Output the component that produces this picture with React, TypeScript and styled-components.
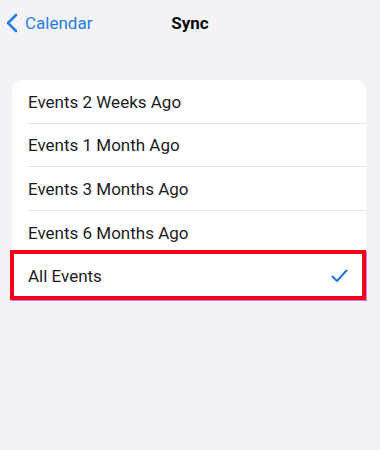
import React from "react";
import styled, { createGlobalStyle } from "styled-components";

const Global = createGlobalStyle`
  html, body { margin: 0; padding: 0; background: #f2f2f7; }
  body { font-family: Roboto, "Noto Sans", sans-serif; -webkit-font-smoothing: antialiased; }
`;

const Page = styled.div`
  width: 380px;
  height: 450px;
  background: #f2f2f7;
  display: flex;
  flex-direction: column;
`;

const NavBar = styled.div`
  height: 46px;
  display: grid;
  grid-template-columns: 1fr auto 1fr;
  align-items: center;
  padding: 0 6px;
  box-sizing: border-box;
`;

const BackButton = styled.div`
  display: flex;
  align-items: center;
  gap: 7px;
  color: #2a7de1;
  font-size: 17px;
`;

const Title = styled.div`
  font-size: 17px;
  font-weight: 700;
  color: #0a0a0a;
`;

const Card = styled.div`
  margin: 34px 14px 0 12px;
  background: #ffffff;
  border-radius: 10px;
  display: flex;
  flex-direction: column;
`;

const Row = styled.div<{ $last?: boolean }>`
  position: relative;
  height: 43.6px;
  display: flex;
  align-items: center;
  justify-content: space-between;
  padding: 0 18px 0 16px;
  font-size: 17px;
  color: #1c1c1e;
  &::after {
    content: "";
    display: ${(p) => (p.$last ? "none" : "block")};
    position: absolute;
    left: 16px;
    right: 0;
    bottom: 0;
    height: 1px;
    background: #e4e4e8;
  }
`;

const Highlight = styled.div`
  position: absolute;
  left: -2px;
  top: -4px;
  right: 0px;
  bottom: -2px;
  border: 4px solid #f2001a;
  box-shadow: 1px 1px 0 #d47cf0;
  pointer-events: none;
`;

const Check = () => (
  <svg width="17" height="14" viewBox="0 0 17 14" fill="none">
    <path d="M1.5 7.5 L6 12 L15.5 1.5" stroke="#1f74e0" strokeWidth="2" strokeLinecap="round" strokeLinejoin="round" />
  </svg>
);

const Chevron = () => (
  <svg width="12" height="20" viewBox="0 0 12 20" fill="none">
    <path d="M10 2 L2 10 L10 18" stroke="#2a7de1" strokeWidth="2.6" strokeLinecap="round" strokeLinejoin="round" />
  </svg>
);

const options = [
  "Events 2 Weeks Ago",
  "Events 1 Month Ago",
  "Events 3 Months Ago",
  "Events 6 Months Ago",
  "All Events",
];

export default function App() {
  return (
    <>
      <Global />
      <Page>
        <NavBar>
          <BackButton>
            <Chevron />
            <span>Calendar</span>
          </BackButton>
          <Title>Sync</Title>
          <div />
        </NavBar>
        <Card>
          {options.map((o, i) => {
            const last = i === options.length - 1;
            return (
              <Row key={o} $last={last}>
                <span>{o}</span>
                {last && <Check />}
                {last && <Highlight />}
              </Row>
            );
          })}
        </Card>
      </Page>
    </>
  );
}
